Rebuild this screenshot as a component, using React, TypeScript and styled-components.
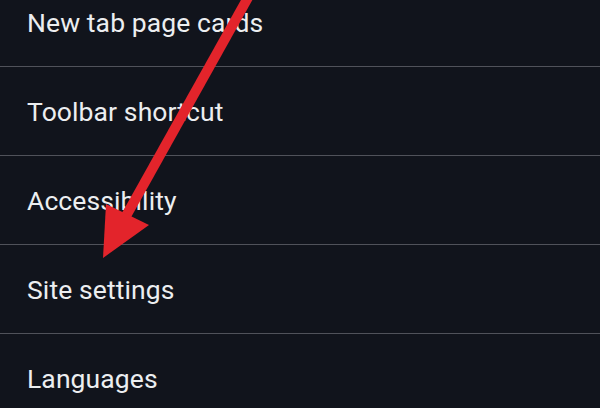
import React from "react";
import styled, { createGlobalStyle } from "styled-components";

const Global = createGlobalStyle`
  html, body {
    margin: 0;
    padding: 0;
    background: #11141c;
    overflow: hidden;
  }
  body {
    width: 600px;
    height: 408px;
  }
`;

const Screen = styled.div`
  position: relative;
  width: 600px;
  height: 408px;
  overflow: hidden;
  background: #11141c;
  font-family: Roboto, "Noto Sans", sans-serif;
`;

const List = styled.ul`
  list-style: none;
  margin: -22px 0 0 0;
  padding: 0;
  display: flex;
  flex-direction: column;
`;

const Row = styled.li`
  height: 88px;
  display: flex;
  align-items: center;
  padding-left: 27px;
  border-bottom: 1px solid #50525a;
  color: #eceef0;
  font-size: 26.5px;
  letter-spacing: 0.1px;
`;

const ArrowLayer = styled.svg`
  position: absolute;
  left: 0;
  top: 0;
  pointer-events: none;
`;

const items = [
  "New tab page cards",
  "Toolbar shortcut",
  "Accessibility",
  "Site settings",
  "Languages",
];

export default function App() {
  return (
    <>
      <Global />
      <Screen>
        <List>
          {items.map((t) => (
            <Row key={t}>{t}</Row>
          ))}
        </List>
        <ArrowLayer width="600" height="408" viewBox="0 0 600 408">
          <line
            x1="250"
            y1="-6"
            x2="126"
            y2="216"
            stroke="#e3242b"
            strokeWidth="10"
          />
          <polygon points="103,258 106,204 149,225" fill="#e3242b" />
        </ArrowLayer>
      </Screen>
    </>
  );
}
